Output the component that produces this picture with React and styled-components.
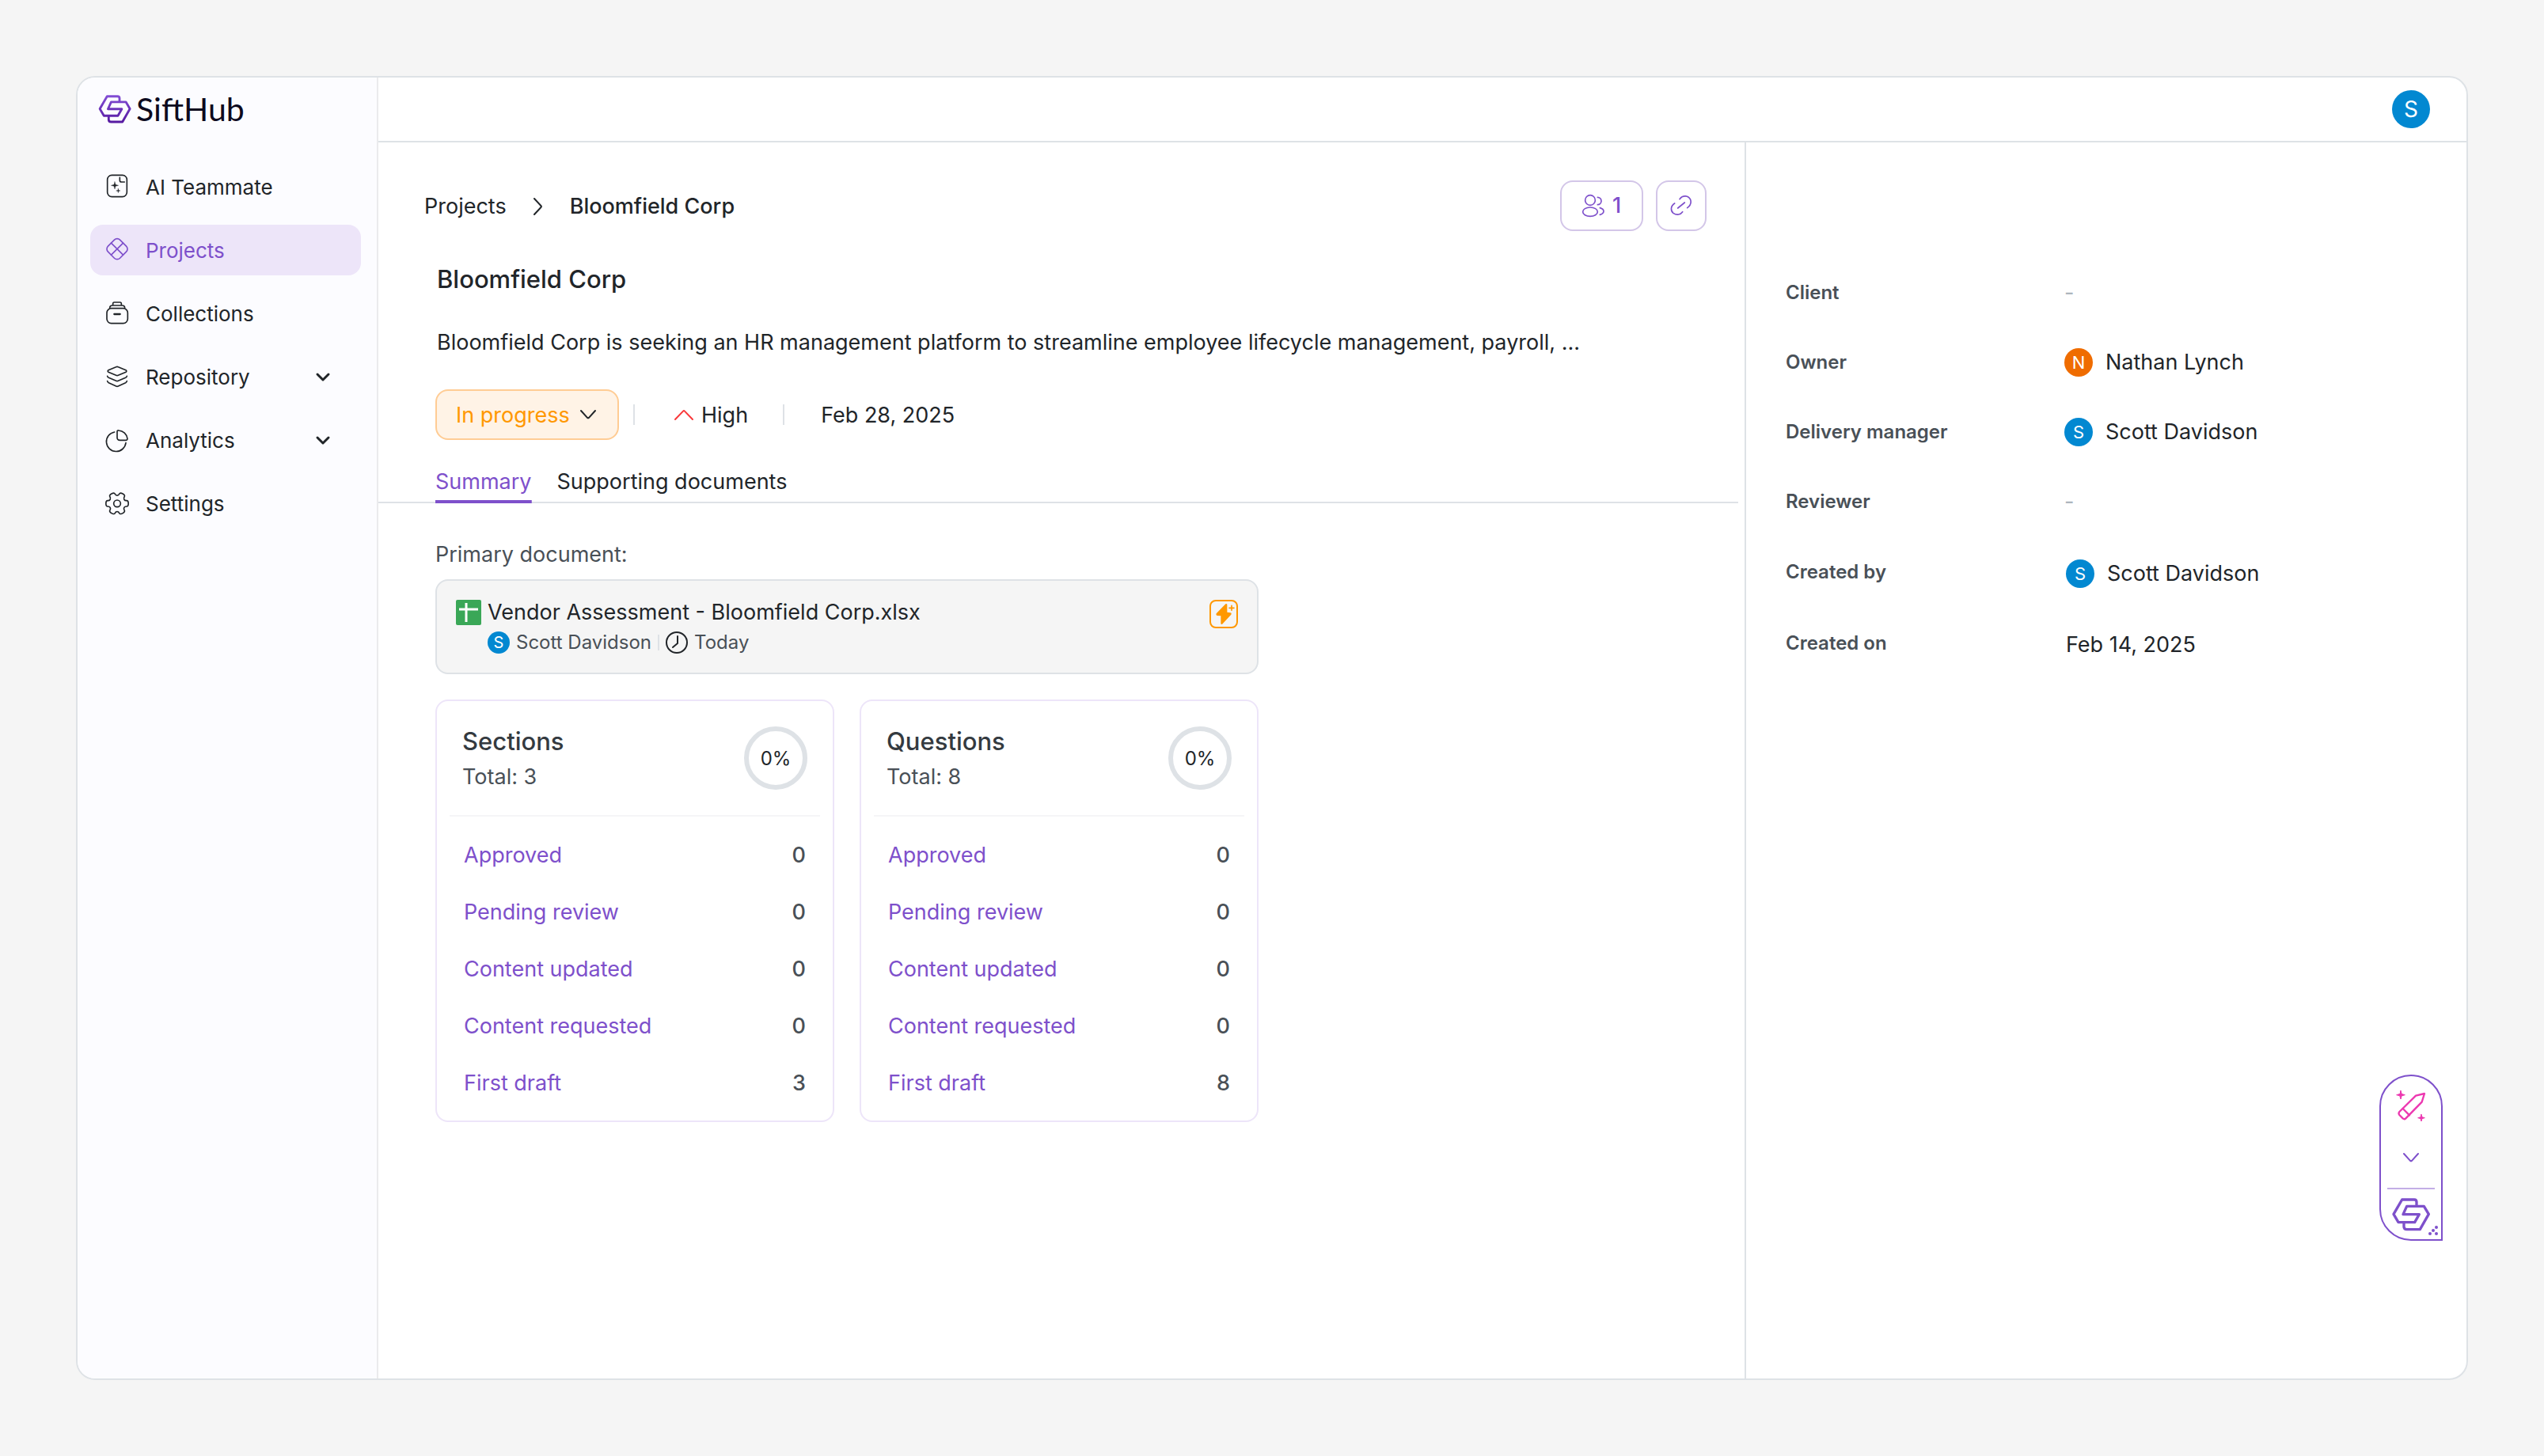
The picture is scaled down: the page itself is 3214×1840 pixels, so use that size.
import styled, { createGlobalStyle } from "styled-components";

const NAV_ITEMS = [
  { label: "AI Teammate", icon: TeammateIcon },
  { label: "Projects", icon: ProjectsIcon, active: true },
  { label: "Collections", icon: CollectionsIcon },
  { label: "Repository", icon: RepositoryIcon, expandable: true },
  { label: "Analytics", icon: AnalyticsIcon, expandable: true },
  { label: "Settings", icon: SettingsIcon },
];

const STATS = [
  {
    title: "Sections",
    total: 3,
    rows: [
      ["Approved", 0],
      ["Pending review", 0],
      ["Content updated", 0],
      ["Content requested", 0],
      ["First draft", 3],
    ],
  },
  {
    title: "Questions",
    total: 8,
    rows: [
      ["Approved", 0],
      ["Pending review", 0],
      ["Content updated", 0],
      ["Content requested", 0],
      ["First draft", 8],
    ],
  },
];

const DETAILS = [
  { label: "Client" },
  { label: "Owner", person: "Nathan Lynch", color: "#ef6c00" },
  { label: "Delivery manager", person: "Scott Davidson", color: "#0288d1" },
  { label: "Reviewer" },
  {
    label: "Created by",
    person: "Scott Davidson",
    color: "#0288d1",
    readOnly: true,
  },
  { label: "Created on", text: "Feb 14, 2025", readOnly: true },
];

export default function App() {
  return (
    <Page>
      <GlobalStyle />
      <Frame>
        <Sidebar />
        <Content>
          <TopBar>
            <Avatar $size={48} $font={28} $color="#0288d1">
              S
            </Avatar>
          </TopBar>
          <Columns>
            <Project />
            <Details />
          </Columns>
        </Content>
        <Assistant />
      </Frame>
    </Page>
  );
}

function Sidebar() {
  return (
    <SidebarWrap>
      <Brand href="#">
        <LogoMark width={42} height={36} gradient />
        SiftHub
      </Brand>
      <NavList>
        {NAV_ITEMS.map(({ label, icon: Icon, active, expandable }) => (
          <li key={label}>
            <NavLink href="#" $active={active}>
              <Icon />
              <span>{label}</span>
              {expandable && <Chevron size={24} stroke={3} />}
            </NavLink>
          </li>
        ))}
      </NavList>
    </SidebarWrap>
  );
}

function Project() {
  return (
    <Main>
      <HeadRow>
        <Breadcrumb aria-label="Breadcrumb">
          <a href="#">Projects</a>
          <svg width="16" height="24" viewBox="0 0 16 24" {...line(2)}>
            <path d="M3 2l8.4 9q1 1 0 2L3 22" />
          </svg>
          <strong>Bloomfield Corp</strong>
        </Breadcrumb>
        <Actions>
          <ActionButton type="button">
            <PeopleIcon />1
          </ActionButton>
          <ActionButton type="button" $square aria-label="Copy link">
            <LinkIcon />
          </ActionButton>
        </Actions>
      </HeadRow>
      <Summary>
        <h1>Bloomfield Corp</h1>
        <p>
          Bloomfield Corp is seeking an HR management platform to streamline
          employee lifecycle management, payroll, ...
        </p>
      </Summary>
      <MetaRow>
        <Status>
          <select aria-label="Status" defaultValue="In progress">
            <option>In progress</option>
            <option>Done</option>
          </select>
          <Chevron size={24} stroke={2} />
        </Status>
        <Divider />
        <Priority>
          <svg width="28" height="28" viewBox="0 0 28 28" {...line(2)}>
            <path d="M3 19l10-10.4q1-1 2 0L25 19" />
          </svg>
          High
        </Priority>
        <Divider />
        <DueDate>Feb 28, 2025</DueDate>
      </MetaRow>
      <Tabs role="tablist">
        <Tab type="button" role="tab" aria-selected="true" $active>
          Summary
        </Tab>
        <Tab type="button" role="tab" aria-selected="false">
          Supporting documents
        </Tab>
      </Tabs>
      <Body>
        <SectionLabel>Primary document:</SectionLabel>
        <DocumentCard>
          <SheetIcon />
          <DocumentInfo>
            <a href="#">Vendor Assessment - Bloomfield Corp.xlsx</a>
            <DocumentMeta>
              <Avatar $size={28} $font={20} $color="#0288d1">
                S
              </Avatar>
              Scott Davidson
              <Divider $small />
              <ClockIcon />
              Today
            </DocumentMeta>
          </DocumentInfo>
          <BoltButton type="button" aria-label="Autofill">
            <BoltIcon />
          </BoltButton>
        </DocumentCard>
        <Stats>
          {STATS.map((stat) => (
            <StatCard key={stat.title}>
              <StatHeader>
                <div>
                  <h2>{stat.title}</h2>
                  <p>Total: {stat.total}</p>
                </div>
                <Ring>0%</Ring>
              </StatHeader>
              <StatRows>
                {stat.rows.map(([label, count]) => (
                  <li key={label}>
                    <a href="#">{label}</a>
                    <span>{count}</span>
                  </li>
                ))}
              </StatRows>
            </StatCard>
          ))}
        </Stats>
      </Body>
    </Main>
  );
}

function Details() {
  return (
    <Aside>
      <DetailList>
        {DETAILS.map(({ label, person, color, text, readOnly }) => (
          <DetailRow key={label} $readOnly={readOnly}>
            <dt>{label}</dt>
            {person && (
              <dd>
                <Avatar $size={36} $font={22} $color={color}>
                  {person[0]}
                </Avatar>
                {person}
              </dd>
            )}
            {text && <dd>{text}</dd>}
            {!person && !text && <Empty>-</Empty>}
          </DetailRow>
        ))}
      </DetailList>
    </Aside>
  );
}

function Assistant() {
  return (
    <AssistantBar>
      <button type="button" aria-label="Write with AI">
        <PencilIcon />
      </button>
      <button type="button" aria-label="Collapse">
        <Chevron size={24} stroke={2} />
      </button>
      <hr />
      <button type="button" aria-label="Open SiftHub">
        <LogoMark width={48} height={42} />
      </button>
      <DragDots width="14" height="14" viewBox="0 0 14 14" fill="currentColor">
        <circle cx="11" cy="3" r="2" />
        <circle cx="7" cy="7" r="2" />
        <circle cx="3" cy="11" r="2" />
        <circle cx="11" cy="11" r="2" />
      </DragDots>
    </AssistantBar>
  );
}

/* icons */

function line(width) {
  return {
    fill: "none",
    stroke: "currentColor",
    strokeWidth: width,
    strokeLinecap: "round",
    strokeLinejoin: "round",
    "aria-hidden": true,
  };
}

// four-pointed star around (x, y)
function spark(x, y, r) {
  const k = r * 0.22;
  return `M${x} ${y - r}L${x + k} ${y - k}L${x + r} ${y}L${x + k} ${y + k}L${x} ${y + r}L${x - k} ${y + k}L${x - r} ${y}L${x - k} ${y - k}Z`;
}

function NavIcon({ children }) {
  return (
    <svg width="28" height="28" viewBox="0 0 84 84" overflow="visible" {...line(5)}>
      {children}
    </svg>
  );
}

function LogoMark({ width, height, gradient }) {
  return (
    <svg
      width={width}
      height={height}
      viewBox="366 579 144 126"
      aria-hidden="true"
      fill="none"
      stroke={gradient ? "url(#brand)" : "currentColor"}
      strokeWidth="10"
      strokeLinejoin="round"
    >
      <linearGradient
        id="brand"
        gradientUnits="userSpaceOnUse"
        x1="0"
        y1="579"
        x2="0"
        y2="705"
      >
        <stop offset="0" stopColor="#8450d6" />
        <stop offset="1" stopColor="#55189f" />
      </linearGradient>
      <path d="M459 607V594Q459 585 450 585H404L372 640L390 671H452L469 641H408L422 610H487L505 640L472 698H422Q411 698 411 688V673" />
    </svg>
  );
}

function TeammateIcon() {
  return (
    <NavIcon>
      <rect x="5" y="-5" width="74" height="82" rx="17" />
      <path d="M52 4v10q0 7 7 7h11" />
      <path d={spark(33, 34, 14)} fill="currentColor" strokeWidth="1" />
      <path d={spark(46, 54, 8)} fill="currentColor" strokeWidth="1" />
    </NavIcon>
  );
}

function ProjectsIcon() {
  return (
    <NavIcon>
      <g transform="rotate(45 42 35)">
        <rect x="10" y="3" width="64" height="64" rx="15" />
        <path d="M42 3v64M10 35h64" />
      </g>
    </NavIcon>
  );
}

function CollectionsIcon() {
  return (
    <NavIcon>
      <rect x="3" y="20" width="79" height="57" rx="17" />
      <path d="M14 19q0-10 10-10h37q10 0 10 10" />
      <path d="M26 7V2q0-5 5-5h22q5 0 5 5v5" />
      <path d="M31 42h22" strokeWidth="7" />
    </NavIcon>
  );
}

function RepositoryIcon() {
  return (
    <NavIcon>
      <path d="M38 2L9 14q-5 4 0 8l29 12q4 2 8 0l29-12q5-4 0-8L46 2q-4-2-8 0z" />
      <path d="M5 37q1 4 5 6l28 12q4 2 8 0l28-12q4-2 5-6" />
      <path d="M5 56q1 4 5 6l28 13q4 2 8 0l28-13q4-2 5-6" />
    </NavIcon>
  );
}

function AnalyticsIcon() {
  return (
    <NavIcon>
      <path d="M32 9A37 37 0 1 0 75 50" />
      <path d="M42 8q0-6 6-5A36 36 0 0 1 81 34q0 6-6 6H53Q42 40 42 30z" />
    </NavIcon>
  );
}

// six-lobed cog, corners softened by running quads between edge midpoints
function cogPath() {
  const at = (r, deg) => [
    42 + r * Math.cos((deg * Math.PI) / 180),
    40 + r * Math.sin((deg * Math.PI) / 180),
  ];
  const points = [];
  for (let a = 0; a < 360; a += 60) {
    points.push(at(44, a - 15), at(44, a + 15), at(31, a + 20), at(31, a + 40));
  }
  const mid = (p, q) => `${(p[0] + q[0]) / 2} ${(p[1] + q[1]) / 2}`;
  const last = points[points.length - 1];
  return (
    points.reduce(
      (d, p, i) =>
        `${d}Q${p[0]} ${p[1]} ${mid(p, points[(i + 1) % points.length])}`,
      `M${mid(last, points[0])}`
    ) + "Z"
  );
}

function SettingsIcon() {
  return (
    <NavIcon>
      <path d={cogPath()} />
      <circle cx="42" cy="40" r="13" />
    </NavIcon>
  );
}

function Chevron({ size, stroke }) {
  return (
    <svg width={size} height={size} viewBox="0 0 24 24" {...line(stroke)}>
      <path
        d={stroke > 2 ? "M5 8l7 7 7-7" : "M3 7l8 8.8q1 1 2 0L21 7"}
      />
    </svg>
  );
}

function PeopleIcon() {
  return (
    <NavIcon>
      <circle cx="30" cy="21" r="19" />
      <ellipse cx="30" cy="65" rx="28" ry="17" />
      <path d="M58 10A14 14 0 1 1 58 38" />
      <path d="M67 50q14 4 14 13t-14 13" />
    </NavIcon>
  );
}

function LinkIcon() {
  return (
    <NavIcon>
      <path d="M29 51L55 30" />
      <path d="M36 17C48 0 70 3 77 19q6 18-12 31" />
      <path d="M17 33C0 44 2 62 12 70c14 10 28 5 35-5" />
    </NavIcon>
  );
}

function ClockIcon() {
  return (
    <svg width="28" height="28" viewBox="0 0 28 28" {...line(2)} color="#212529">
      <circle cx="14" cy="14" r="13" />
      <path d="M15 6v9l-6 5" />
    </svg>
  );
}

function SheetIcon() {
  return (
    <svg width="32" height="32" viewBox="0 0 32 32" aria-hidden="true">
      <rect width="32" height="32" rx="2" fill="#3aa757" />
      <path d="M13 4v24M4 12h24" stroke="#fff" strokeWidth="3" />
    </svg>
  );
}

function BoltIcon() {
  return (
    <svg width="32" height="32" viewBox="6 6 96 96" fill="currentColor">
      <path d="M61 16L26 52q-3 6 3 8l14 1v29q2 5 7 1l32-35q3-6-3-7l-12-2V18q-2-5-6-2z" />
      <path
        d="M84 22v18M75 31h18"
        stroke="currentColor"
        strokeWidth="5"
        strokeLinecap="round"
      />
    </svg>
  );
}

function PencilIcon() {
  return (
    <svg
      width="38"
      height="42"
      viewBox="380 172 114 126"
      {...line(7)}
      color="#ec37b0"
    >
      <path d="M488 187l-33 8-62 61q-5 6 0 12l13 13q6 5 11 0l61-62z" />
      <path d="M406 244l25 25" />
      <path d={spark(398, 192, 16)} fill="currentColor" strokeWidth="3" />
      <path d={spark(476, 279, 13)} fill="currentColor" strokeWidth="3" />
    </svg>
  );
}

/* styles */

const GlobalStyle = createGlobalStyle`
  * {
    box-sizing: border-box;
  }

  body {
    margin: 0;
    background: #f5f5f5;
    color: #212529;
    font-family: Inter, "Liberation Sans", sans-serif;
    font-size: 27px;
    line-height: 40px;
  }

  h1, h2, p, ul, dl, dd {
    margin: 0;
    padding: 0;
  }

  ul {
    list-style: none;
  }

  a {
    color: inherit;
    text-decoration: none;
  }

  button, select {
    font: inherit;
    cursor: pointer;
  }

  svg {
    flex-shrink: 0;
  }
`;

const Page = styled.div`
  min-height: 100vh;
  padding: 96px;
  display: flex;
`;

const Frame = styled.div`
  position: relative;
  flex: 1;
  display: flex;
  background: #ffffff;
  border: 2px solid #dee2e6;
  border-radius: 24px;
  overflow: hidden;
`;

const SidebarWrap = styled.nav`
  width: 380px;
  flex-shrink: 0;
  background: #fcfcff;
  border-right: 2px solid #ebebed;
`;

const Brand = styled.a`
  display: flex;
  align-items: center;
  gap: 6px;
  height: 80px;
  padding-left: 26px;
  font-family: Lato, sans-serif;
  font-size: 41px;
  color: #0d0a1e;
`;

const NavList = styled.ul`
  display: flex;
  flex-direction: column;
  gap: 16px;
  padding: 26px 20px 26px 16px;
`;

const NavLink = styled.a`
  display: flex;
  align-items: center;
  gap: 22px;
  height: 64px;
  padding: 2px 36px 0 20px;
  border-radius: 16px;
  font-size: 26px;
  color: ${({ $active }) => ($active ? "#7e50cb" : "#212529")};
  background: ${({ $active }) => ($active ? "#ede5f9" : "transparent")};

  span {
    flex: 1;
  }
`;

const Content = styled.div`
  flex: 1;
  min-width: 0;
  display: flex;
  flex-direction: column;
`;

const TopBar = styled.header`
  display: flex;
  align-items: center;
  justify-content: flex-end;
  height: 82px;
  padding-right: 46px;
  border-bottom: 2px solid #dee2e6;
`;

const Avatar = styled.span`
  display: flex;
  align-items: center;
  justify-content: center;
  flex-shrink: 0;
  width: ${({ $size }) => $size}px;
  height: ${({ $size }) => $size}px;
  border-radius: 50%;
  background: ${({ $color }) => $color};
  color: #ffffff;
  font-size: ${({ $font }) => $font}px;
`;

const Columns = styled.div`
  flex: 1;
  display: flex;
`;

const Main = styled.main`
  flex: 1;
  min-width: 0;
  padding-top: 48px;
`;

const HeadRow = styled.div`
  display: flex;
  align-items: center;
  justify-content: space-between;
  padding: 0 48px 0 58px;
`;

const Breadcrumb = styled.nav`
  display: flex;
  align-items: center;
  gap: 32px;
  padding-top: 2px;

  strong {
    font-weight: 500;
  }
`;

const Actions = styled.div`
  display: flex;
  gap: 16px;
`;

const ActionButton = styled.button`
  display: flex;
  align-items: center;
  justify-content: center;
  gap: 10px;
  height: 64px;
  min-width: ${({ $square }) => ($square ? 64 : 105)}px;
  padding: 0;
  background: #ffffff;
  border: 2px solid #d3c6e8;
  border-radius: 16px;
  color: #7e50cb;
  font-weight: 500;
`;

const Summary = styled.div`
  padding: 41px 74px 39px;

  h1 {
    margin-bottom: 40px;
    font-size: 31px;
    font-weight: 500;
  }
`;

const MetaRow = styled.div`
  display: flex;
  align-items: center;
  padding-left: 72px;
`;

const Status = styled.div`
  position: relative;
  width: 232px;
  margin-right: 18px;

  select {
    appearance: none;
    display: block;
    width: 100%;
    height: 64px;
    padding: 2px 24px 0;
    border: 2px solid #ffcc94;
    border-radius: 16px;
    background: #fff3e6;
    color: #ff9800;
  }

  svg {
    position: absolute;
    top: 20px;
    right: 27px;
    pointer-events: none;
  }
`;

const Divider = styled.span`
  width: 2px;
  height: ${({ $small }) => ($small ? 20 : 26)}px;
  background: #dee2e6;
`;

const Priority = styled.span`
  display: flex;
  align-items: center;
  gap: 8px;
  padding: 2px 44px 0 48px;

  svg {
    color: #f9383a;
  }
`;

const DueDate = styled.time`
  padding: 2px 0 0 46px;
`;

const Tabs = styled.div`
  display: flex;
  gap: 32px;
  margin: 24px 8px 0 0;
  padding-left: 72px;
  border-bottom: 2px solid #dee2e6;
`;

const Tab = styled.button`
  height: 56px;
  margin-bottom: -2px;
  padding: 2px 0 0;
  border: 0;
  border-radius: 2px 2px 0 0;
  background: ${({ $active }) =>
    $active
      ? "linear-gradient(#7e50cb, #7e50cb) bottom / 100% 4px no-repeat"
      : "none"};
  color: ${({ $active }) => ($active ? "#7e50cb" : "#212529")};
`;

const Body = styled.div`
  max-width: 1184px;
  padding: 45px 72px;
`;

const SectionLabel = styled.p`
  margin-bottom: 11px;
  color: #495057;
`;

const DocumentCard = styled.section`
  display: flex;
  align-items: flex-start;
  gap: 8px;
  padding: 24px;
  border: 2px solid #dee2e6;
  border-radius: 16px;
  background: #f5f5f5;
`;

const DocumentInfo = styled.div`
  flex: 1;
  display: flex;
  flex-direction: column;
  gap: 8px;
  line-height: 32px;
`;

const DocumentMeta = styled.div`
  display: flex;
  align-items: center;
  gap: 8px;
  height: 28px;
  font-size: 24px;
  color: #495057;
`;

const BoltButton = styled.button`
  display: flex;
  padding: 0;
  border: 2px solid #ff9800;
  border-radius: 8px;
  background: none;
  color: #ff9800;
`;

const Stats = styled.div`
  display: grid;
  grid-template-columns: 1fr 1fr;
  gap: 32px;
  margin-top: 32px;
`;

const StatCard = styled.section`
  border: 2px solid #ede5f9;
  border-radius: 16px;
`;

const StatHeader = styled.header`
  display: flex;
  align-items: center;
  justify-content: space-between;
  height: 146px;
  margin: 0 16px;
  padding: 0 16px;
  border-bottom: 2px solid #f5f5f7;
  line-height: 45px;

  div:first-child {
    padding-top: 2px;
  }

  h2 {
    font-size: 31px;
    font-weight: 500;
    color: #343a40;
  }

  p {
    color: #495057;
  }
`;

const Ring = styled.div`
  display: flex;
  align-items: center;
  justify-content: center;
  width: 80px;
  height: 80px;
  border: 6px solid #dee2e6;
  border-radius: 50%;
  font-size: 24px;
`;

const StatRows = styled.ul`
  padding: 13px 34px 11px;

  li {
    display: flex;
    align-items: center;
    justify-content: space-between;
    height: 72px;
  }

  a {
    color: #7e50cb;
  }

  span {
    font-weight: 500;
    color: #495057;
  }
`;

const Aside = styled.aside`
  width: 912px;
  flex-shrink: 0;
  padding: 146px 50px;
  border-left: 2px solid #dee2e6;
`;

const DetailList = styled.dl`
  display: flex;
  flex-direction: column;
`;

const DetailRow = styled.div`
  display: flex;
  align-items: center;
  height: ${({ $readOnly }) => ($readOnly ? 90 : 88)}px;

  dt {
    width: 352px;
    font-size: 24px;
    font-weight: 600;
    color: #495057;
  }

  dd {
    display: flex;
    align-items: center;
    gap: 16px;
    padding: ${({ $readOnly }) => ($readOnly ? "4px 0 0 2px" : "0")};
  }
`;

const Empty = styled.dd`
  color: #adb5bd;
`;

const AssistantBar = styled.div`
  position: absolute;
  right: 30px;
  bottom: 174px;
  display: flex;
  flex-direction: column;
  align-items: center;
  width: 80px;
  padding: 17px 0 10px;
  border: 2px solid #7e50cb;
  border-radius: 40px 40px 0 40px;
  background: #ffffff;
  color: #7e50cb;

  button {
    display: flex;
    padding: 0;
    border: 0;
    background: none;
    color: inherit;
  }

  button:nth-of-type(2) {
    margin: 32px 0 26px;
  }

  hr {
    width: 60px;
    height: 2px;
    margin: 0 0 11px;
    border: 0;
    background: #c3aee5;
  }
`;

const DragDots = styled.svg`
  position: absolute;
  right: 3px;
  bottom: 4px;
`;
